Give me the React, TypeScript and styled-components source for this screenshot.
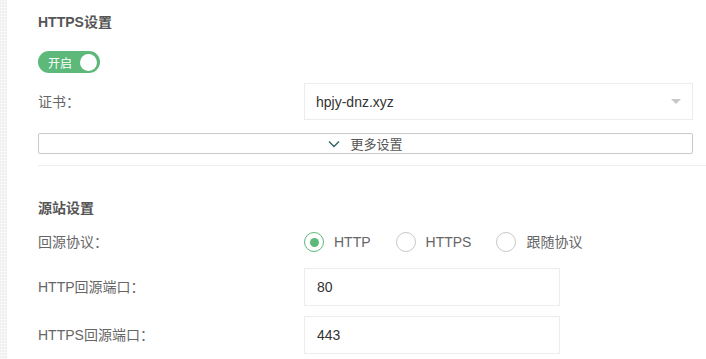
import React from "react";
import styled, { createGlobalStyle } from "styled-components";

const GlobalStyle = createGlobalStyle`
  html, body {
    margin: 0;
    padding: 0;
    background: #fff;
    font-family: "Liberation Sans", "Noto Sans CJK SC", sans-serif;
  }
`;

const Page = styled.div`
  display: flex;
  width: 706px;
  height: 359px;
  overflow: hidden;
`;

const Strip = styled.div`
  width: 7px;
  flex-shrink: 0;
  background-color: #eeeeee;
  background-image: radial-gradient(#f8f8f8 1px, transparent 1.2px);
  background-size: 3px 3px;
`;

const Content = styled.div`
  flex: 1;
  display: flex;
  flex-direction: column;
`;

const Section = styled.div<{ $pt: number }>`
  display: flex;
  flex-direction: column;
  padding: ${({ $pt }) => $pt}px 13px 0 31px;
`;

const Title = styled.div<{ $bold?: boolean }>`
  font-size: 14px;
  font-weight: ${({ $bold }) => ($bold ? 700 : 600)};
  color: #555;
  line-height: 20px;
`;

const Switch = styled.div`
  margin-top: 19px;
  width: 62px;
  height: 22px;
  border-radius: 11px;
  background: #5cb97a;
  display: flex;
  align-items: center;
  justify-content: space-between;
  padding: 0 3px 0 10px;
  box-sizing: border-box;
  color: #fff;
  font-size: 12px;
`;

const Knob = styled.span`
  width: 17px;
  height: 17px;
  border-radius: 50%;
  background: #fff;
`;

const Row = styled.div<{ $mt: number }>`
  display: flex;
  align-items: center;
  margin-top: ${({ $mt }) => $mt}px;
`;

const Label = styled.div`
  width: 266px;
  flex-shrink: 0;
  font-size: 14px;
  line-height: 20px;
  color: #666;
`;

const Select = styled.div`
  flex: 1;
  height: 37px;
  border: 1px solid #ececec;
  box-sizing: border-box;
  display: flex;
  align-items: center;
  justify-content: space-between;
  padding: 0 11px 0 11px;
  font-size: 14px;
  color: #333;
`;

const Caret = styled.span`
  width: 0;
  height: 0;
  border-left: 5px solid transparent;
  border-right: 5px solid transparent;
  border-top: 5px solid #c8c8c8;
`;

const MoreButton = styled.div`
  margin-top: 13px;
  height: 21px;
  border: 1px solid #c9c9c9;
  border-radius: 2px;
  box-sizing: border-box;
  display: flex;
  align-items: center;
  justify-content: center;
  gap: 10px;
  font-size: 13px;
  color: #555;
`;

const Divider = styled.div`
  margin: 11px 0 0 31px;
  height: 1px;
  background: #eeeeee;
`;

const Radios = styled.div`
  display: flex;
  align-items: center;
`;

const RadioItem = styled.label`
  display: flex;
  align-items: center;
  margin-right: 25px;
  font-size: 14px;
  line-height: 20px;
  color: #666;
`;

const RadioCircle = styled.span<{ $on?: boolean }>`
  width: 20px;
  height: 20px;
  border-radius: 50%;
  box-sizing: border-box;
  border: 1px solid ${({ $on }) => ($on ? "#5cb97a" : "#c8c8c8")};
  display: flex;
  align-items: center;
  justify-content: center;
  margin-right: 10px;
  &::after {
    content: "";
    width: 9px;
    height: 9px;
    border-radius: 50%;
    background: ${({ $on }) => ($on ? "#5cb97a" : "transparent")};
  }
`;

const Input = styled.div`
  width: 256px;
  height: 38px;
  border: 1px solid #ececec;
  box-sizing: border-box;
  display: flex;
  align-items: center;
  padding-left: 12px;
  font-size: 14px;
  color: #333;
`;

const Chevron = () => (
  <svg width="12" height="8" viewBox="0 0 12 8">
    <path d="M1 1.5 L6 6.5 L11 1.5" fill="none" stroke="#2f5f5f" strokeWidth="1.3" />
  </svg>
);

export default function App() {
  return (
    <>
      <GlobalStyle />
      <Page>
        <Strip />
        <Content>
          <Section $pt={12}>
            <Title $bold>HTTPS设置</Title>
            <Switch>
              开启
              <Knob />
            </Switch>
            <Row $mt={10}>
              <Label>证书：</Label>
              <Select>
                hpjy-dnz.xyz
                <Caret />
              </Select>
            </Row>
            <MoreButton>
              <Chevron />
              更多设置
            </MoreButton>
          </Section>
          <Divider />
          <Section $pt={32}>
            <Title>源站设置</Title>
            <Row $mt={14}>
              <Label>回源协议：</Label>
              <Radios>
                <RadioItem>
                  <RadioCircle $on />
                  HTTP
                </RadioItem>
                <RadioItem>
                  <RadioCircle />
                  HTTPS
                </RadioItem>
                <RadioItem>
                  <RadioCircle />
                  跟随协议
                </RadioItem>
              </Radios>
            </Row>
            <Row $mt={16}>
              <Label>HTTP回源端口：</Label>
              <Input>80</Input>
            </Row>
            <Row $mt={10}>
              <Label>HTTPS回源端口：</Label>
              <Input>443</Input>
            </Row>
          </Section>
        </Content>
      </Page>
    </>
  );
}
